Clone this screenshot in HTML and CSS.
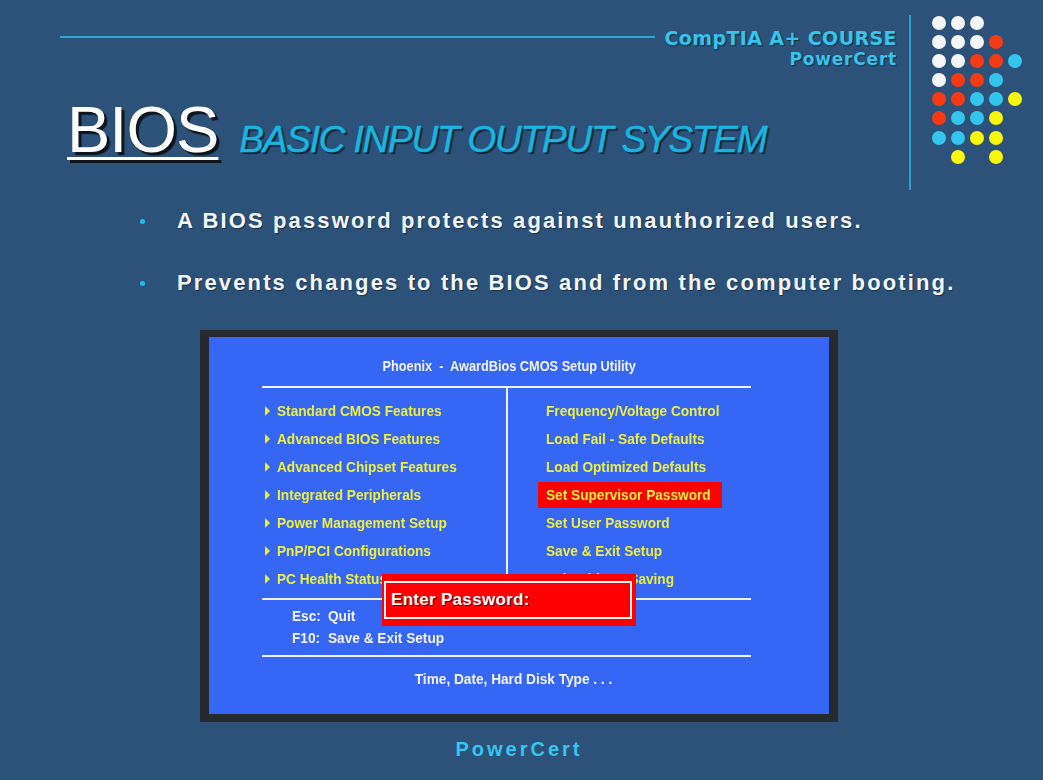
FILE: index.html
```html
<!DOCTYPE html>
<html>
<head>
<meta charset="utf-8">
<title>BIOS - Basic Input Output System</title>
<link rel="stylesheet" href="styles.css">
</head>
<body>
<div class="slide">
  <header class="top">
    <div class="top-main">
      <div class="course-row">
        <div class="course-line"></div>
        <div class="course-name">CompTIA A+ COURSE</div>
      </div>
      <div class="course-sub">PowerCert</div>
      <div class="title-row">
        <h1 class="title-main">BIOS</h1>
        <span class="title-sub">BASIC INPUT OUTPUT SYSTEM</span>
      </div>
    </div>
    <div class="top-divider"></div>
    <div class="dots">
      <span class="dot w"></span><span class="dot w"></span><span class="dot w"></span><span class="dot e"></span><span class="dot e"></span>
      <span class="dot w"></span><span class="dot w"></span><span class="dot w"></span><span class="dot r"></span><span class="dot e"></span>
      <span class="dot w"></span><span class="dot w"></span><span class="dot r"></span><span class="dot r"></span><span class="dot b"></span>
      <span class="dot w"></span><span class="dot r"></span><span class="dot r"></span><span class="dot b"></span><span class="dot e"></span>
      <span class="dot r"></span><span class="dot r"></span><span class="dot b"></span><span class="dot b"></span><span class="dot y"></span>
      <span class="dot r"></span><span class="dot b"></span><span class="dot b"></span><span class="dot y"></span><span class="dot e"></span>
      <span class="dot b"></span><span class="dot b"></span><span class="dot y"></span><span class="dot y"></span><span class="dot e"></span>
      <span class="dot e"></span><span class="dot y"></span><span class="dot e"></span><span class="dot y"></span><span class="dot e"></span>
    </div>
  </header>

  <ul class="points">
    <li><span class="bullet"></span><span>A BIOS password protects against unauthorized users.</span></li>
    <li><span class="bullet"></span><span>Prevents changes to the BIOS and from the computer booting.</span></li>
  </ul>

  <div class="monitor">
    <div class="screen">
      <div class="screen-inner">
        <div class="bios-title"><span class="tc">Phoenix&nbsp; -&nbsp; AwardBios CMOS Setup Utility</span></div>
        <div class="rule"></div>
        <div class="menu">
          <div class="menu-col left">
            <div class="item"><span class="tri"></span><span class="t">Standard CMOS Features</span></div>
            <div class="item"><span class="tri"></span><span class="t">Advanced BIOS Features</span></div>
            <div class="item"><span class="tri"></span><span class="t">Advanced Chipset Features</span></div>
            <div class="item"><span class="tri"></span><span class="t">Integrated Peripherals</span></div>
            <div class="item"><span class="tri"></span><span class="t">Power Management Setup</span></div>
            <div class="item"><span class="tri"></span><span class="t">PnP/PCI Configurations</span></div>
            <div class="item"><span class="tri"></span><span class="t">PC Health Status</span></div>
          </div>
          <div class="menu-col right">
            <div class="item"><span class="opt"><span class="t">Frequency/Voltage Control</span></span></div>
            <div class="item"><span class="opt"><span class="t">Load Fail - Safe Defaults</span></span></div>
            <div class="item"><span class="opt"><span class="t">Load Optimized Defaults</span></span></div>
            <div class="item"><span class="opt selected"><span class="t">Set Supervisor Password</span></span></div>
            <div class="item"><span class="opt"><span class="t">Set User Password</span></span></div>
            <div class="item"><span class="opt"><span class="t">Save &amp; Exit Setup</span></span></div>
            <div class="item"><span class="opt"><span class="t">Exit Without Saving</span></span></div>
          </div>
        </div>
        <div class="rule"></div>
        <div class="keys">
          <span class="t">Esc:</span><span class="t">Quit</span>
          <span class="t">F10:</span><span class="t">Save &amp; Exit Setup</span>
        </div>
        <div class="rule"></div>
        <div class="hint"><span class="tc">Time, Date, Hard Disk Type . . .</span></div>
      </div>
      <div class="popup">
        <div class="popup-box">Enter Password:</div>
      </div>
    </div>
  </div>

  <div class="footer">PowerCert</div>
</div>
</body>
</html>
```

FILE: styles.css
```css
html, body {
  margin: 0;
  padding: 0;
}
body {
  background: #2c5279;
  font-family: "Liberation Sans", Arial, sans-serif;
}
.slide {
  width: 1043px;
  height: 780px;
  overflow: hidden;
}

/* ---------- header ---------- */
.top {
  display: flex;
  height: 198px;
}
.top-main {
  width: 837px;
  padding-left: 60px;
  padding-top: 28px;
}
.course-row {
  display: flex;
  align-items: center;
  height: 20px;
}
.course-line {
  flex: 1;
  height: 2px;
  background: #2aa6d6;
  margin-right: 9px;
  margin-top: -2px;
}
.course-name,
.course-sub {
  font-family: "DejaVu Sans", Verdana, sans-serif;
  font-weight: bold;
  color: #38c3ec;
  text-shadow: 1px 1px 1px #16283a;
  white-space: nowrap;
}
.course-name {
  font-size: 19px;
  line-height: 20px;
  letter-spacing: 0.4px;
}
.course-sub {
  font-size: 17px;
  line-height: 20px;
  letter-spacing: 0.8px;
  text-align: right;
  margin-top: 1px;
}
.title-row {
  display: flex;
  align-items: baseline;
  margin-top: 29px;
  padding-left: 7px;
}
.title-main {
  margin: 0;
  font-size: 65px;
  line-height: 64px;
  font-weight: normal;
  color: #ffffff;
  text-decoration: underline;
  text-decoration-thickness: 3px;
  text-underline-offset: 5px;
  text-shadow: 3px 3px 1px #0d141c;
  letter-spacing: -1px;
}
.title-sub {
  margin-left: 21px;
  font-size: 37px;
  font-style: italic;
  letter-spacing: -1.2px;
  color: #17b6e2;
  -webkit-text-stroke: 0.5px #17b6e2;
  text-shadow: 2px 2px 1px #122334;
}
.top-divider {
  width: 2px;
  height: 175px;
  margin-top: 15px;
  margin-left: 12px;
  background: #2a9fd2;
}
.dots {
  display: grid;
  grid-template-columns: repeat(5, 14px);
  grid-auto-rows: 14px;
  gap: 5.1px 5px;
  margin-left: 21px;
  margin-top: 16px;
  align-content: start;
}
.dot {
  width: 14px;
  height: 14px;
  border-radius: 50%;
}
.dot.w { background: #f4f6f8; }
.dot.r { background: #f53a14; }
.dot.b { background: #33c5ee; }
.dot.y { background: #f9f70c; }
.dot.e { background: transparent; }

/* ---------- bullet points ---------- */
.points {
  list-style: none;
  margin: 10px 0 0 0;
  padding: 0 0 0 140px;
}
.points li {
  display: flex;
  align-items: center;
  font-size: 22px;
  line-height: 26px;
  font-weight: bold;
  letter-spacing: 2.13px;
  color: #f4f5f7;
  text-shadow: 1px 1px 1px #1a3550;
  margin-bottom: 36px;
}
.points li:last-child {
  margin-bottom: 0;
}
.bullet {
  width: 5px;
  height: 5px;
  border-radius: 50%;
  background: #1fbbeb;
  margin-right: 32px;
  flex-shrink: 0;
}

/* ---------- BIOS monitor ---------- */
.monitor {
  margin: 34px 0 0 200px;
  width: 620px;
  border-style: solid;
  border-color: #26292d;
  border-width: 7px 9px 8px 9px;
}
.screen {
  position: relative;
  height: 377px;
  background: #3566f4;
}
.screen-inner {
  margin-left: 53px;
  width: 489px;
  padding-top: 20px;
}
.bios-title,
.item,
.keys,
.hint {
  font-weight: bold;
  font-size: 15px;
  white-space: nowrap;
}
.t,
.tc {
  display: inline-block;
  transform: scaleX(0.91);
  transform-origin: left center;
}
.tc {
  transform-origin: center center;
}
.bios-title {
  font-size: 14px;
  text-align: center;
  line-height: 18px;
  color: #f2f2f6;
  margin-bottom: 11px;
  padding-left: 5px;
}
.rule {
  height: 2px;
  background: #eef0fa;
}
.menu {
  display: flex;
  height: 210px;
}
.menu-col {
  padding-top: 9px;
}
.menu-col.left {
  flex: 0 0 241px;
  padding-left: 3px;
}
.menu-col.right {
  flex: 1;
  min-width: 0;
  border-left: 2px solid #eef0fa;
  padding-left: 30px;
}
.item {
  height: 28px;
  line-height: 28px;
  color: #eeee3c;
  display: flex;
  align-items: center;
}
.tri {
  flex-shrink: 0;
  width: 0;
  height: 0;
  border-left: 5px solid #eeee3c;
  border-top: 5.5px solid transparent;
  border-bottom: 5.5px solid transparent;
  margin-right: 7px;
}
.opt {
  display: inline-block;
  height: 26px;
  line-height: 26px;
  padding: 0 0 0 8px;
  margin-left: 0;
}
.opt.selected {
  width: 176px;
  background: #ff0000;
}
.keys {
  display: grid;
  grid-template-columns: 36px auto;
  grid-auto-rows: 22px;
  line-height: 22px;
  padding: 5px 0 0 30px;
  margin-bottom: 6px;
  color: #f2f2f6;
}
.hint {
  text-align: center;
  line-height: 22px;
  margin-top: 11px;
  color: #f2f2f6;
  padding-left: 15px;
}
.popup {
  position: absolute;
  left: 173px;
  top: 237px;
  width: 248px;
  height: 38px;
  padding: 7px 4px 7px 2px;
  background: #ff0000;
}
.popup-box {
  height: 34px;
  border: 2px solid #f6f6f6;
  padding-left: 5px;
  display: flex;
  align-items: center;
  font-size: 17px;
  font-weight: bold;
  color: #fafafa;
  letter-spacing: 0.3px;
  text-shadow: 1px 1px 0 #700;
}

/* ---------- footer ---------- */
.footer {
  width: 638px;
  margin-left: 200px;
  margin-top: 15px;
  text-align: center;
  font-size: 20px;
  line-height: 24px;
  font-weight: bold;
  letter-spacing: 3px;
  color: #36c5ee;
}
```
